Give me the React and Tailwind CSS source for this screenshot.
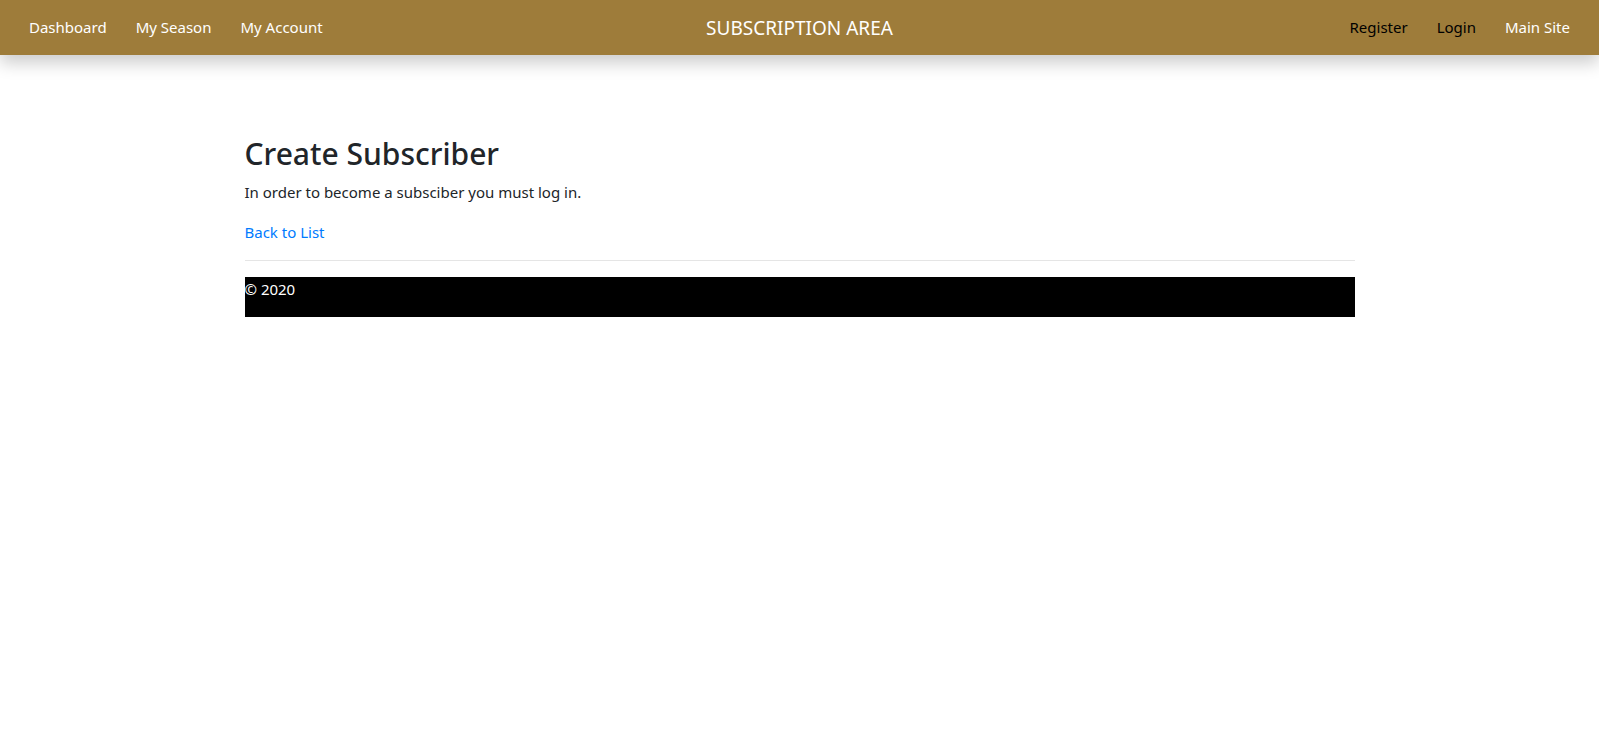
const navLeft = ['Dashboard', 'My Season', 'My Account'];
const navRight = [
  { label: 'Register', tone: 'text-black' },
  { label: 'Login', tone: 'text-black' },
  { label: 'Main Site', tone: 'text-white' },
];

export default function App() {
  return (
    <div className="font-['Noto_Sans','Open_Sans',sans-serif] text-[15px] leading-6 text-[#212529]">
      <header className="bg-[#9e7c3a] shadow-[0_8px_16px_rgba(0,0,0,0.2)]">
        <nav className="grid min-h-[55px] grid-cols-[1fr_auto_1fr] items-center px-[17px]">
          <ul className="flex gap-[5px]">
            {navLeft.map((label) => (
              <li key={label}>
                <a href="#" className="block px-3 pt-[7px] pb-[9px] text-white">{label}</a>
              </li>
            ))}
          </ul>
          <a href="#" className="text-[19px] text-white">SUBSCRIPTION AREA</a>
          <ul className="flex justify-end gap-[5px]">
            {navRight.map(({ label, tone }) => (
              <li key={label}>
                <a href="#" className={`block px-3 pt-[7px] pb-[9px] ${tone}`}>{label}</a>
              </li>
            ))}
          </ul>
        </nav>
      </header>
      <div className="mx-auto max-w-[1142px] px-4 pt-20">
        <main>
          <h1 className="mb-[7px] text-[30px] leading-[38px] font-medium">Create Subscriber</h1>
          <p className="mb-4">In order to become a subsciber you must log in.</p>
          <a href="#" className="text-[#007bff]">Back to List</a>
        </main>
        <hr className="my-4 border-[#e5e5e5]" />
        <footer className="bg-black pb-4 text-white">
          <p>© 2020</p>
        </footer>
      </div>
    </div>
  );
}
